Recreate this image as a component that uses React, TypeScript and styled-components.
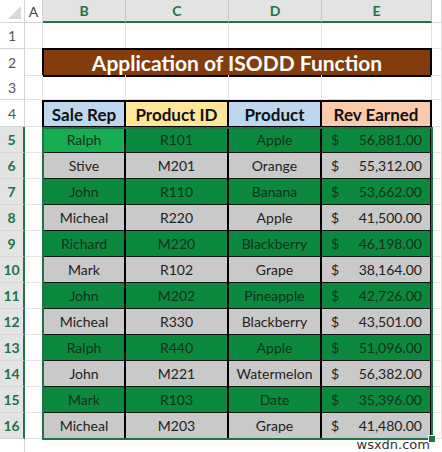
import React from "react";
import styled, { createGlobalStyle } from "styled-components";

const GlobalStyle = createGlobalStyle`
  html, body {
    margin: 0;
    padding: 0;
    background: #ffffff;
  }
  body {
    font-family: Lato, "Noto Sans", sans-serif;
    width: 442px;
    height: 452px;
    overflow: hidden;
  }
`;

const GREEN_UI = "#217346";

const Sheet = styled.div`
  display: flex;
  flex-direction: column;
  width: 442px;
  height: 452px;
`;

const SheetRow = styled.div<{ $h?: number }>`
  display: grid;
  grid-template-columns: 25px 18px 83px 103px 93px 110px 10px;
  height: ${(p) => p.$h ?? 26}px;
`;

const Corner = styled.div`
  background: #ffffff;
  border-right: 1px solid #d4d4d4;
  border-bottom: 1px solid #d4d4d4;
  box-sizing: border-box;
  position: relative;

  &::after {
    content: "";
    position: absolute;
    right: 3px;
    bottom: 3px;
    border-left: 13px solid transparent;
    border-bottom: 13px solid #dadada;
  }
`;

const ColHead = styled.div<{ $selected?: boolean }>`
  display: flex;
  align-items: center;
  justify-content: center;
  box-sizing: border-box;
  font-size: 14px;
  font-weight: ${(p) => (p.$selected ? 700 : 400)};
  color: ${(p) => (p.$selected ? GREEN_UI : "#444")};
  background: ${(p) => (p.$selected ? "#e3e3e3" : "#ffffff")};
  border-right: 1px solid ${(p) => (p.$selected ? "#c6c6c6" : "#d4d4d4")};
  border-bottom: ${(p) => (p.$selected ? `2px solid ${GREEN_UI}` : "1px solid #d4d4d4")};
`;

const RowHead = styled.div<{ $selected?: boolean }>`
  display: flex;
  align-items: center;
  justify-content: center;
  box-sizing: border-box;
  font-size: 14px;
  font-weight: ${(p) => (p.$selected ? 700 : 400)};
  color: ${(p) => (p.$selected ? GREEN_UI : "#555")};
  background: ${(p) => (p.$selected ? "#e3e3e3" : "#ffffff")};
  border-bottom: 1px solid #d4d4d4;
  border-right: ${(p) => (p.$selected ? `2px solid ${GREEN_UI}` : "1px solid #d4d4d4")};
`;

const Blank = styled.div`
  box-sizing: border-box;
  border-right: 1px solid #e2e2e2;
  border-bottom: 1px solid #e2e2e2;
`;

const Title = styled.div`
  grid-column: 3 / 7;
  display: flex;
  align-items: center;
  justify-content: center;
  background: #843c0c;
  color: #ffffff;
  font-size: 21px;
  font-weight: 700;
  border: 2px solid #000;
  margin: -1px 0 -1px -1px;
`;

const HeadCell = styled.div<{ $bg: string; $first?: boolean }>`
  display: flex;
  align-items: center;
  justify-content: center;
  box-sizing: border-box;
  background: ${(p) => p.$bg};
  font-size: 17px;
  font-weight: 700;
  color: #111;
  border-top: 2px solid #000;
  border-right: 2px solid #000;
  border-bottom: 1px solid #000;
  ${(p) => p.$first && "border-left: 2px solid #000; margin-left: -1px;"}
`;

const Cell = styled.div<{ $tone: "green" | "gray" | "active"; $first?: boolean }>`
  display: flex;
  align-items: center;
  justify-content: center;
  box-sizing: border-box;
  font-size: 14px;
  color: ${(p) => (p.$tone === "gray" ? "#222" : "#13301b")};
  background: ${(p) =>
    p.$tone === "active" ? "#17ad52" : p.$tone === "green" ? "#0a893f" : "#c9c9c9"};
  border-right: 2px solid #000;
  border-bottom: 1px solid #111;
  ${(p) => p.$first && "border-left: 2px solid #000; margin-left: -1px;"}
`;

const MoneyCell = styled(Cell)`
  justify-content: space-between;
  padding: 0 8px 0 9px;
`;

const DataSection = styled.div`
  display: flex;
  flex-direction: column;
  position: relative;
`;

const Selection = styled.div`
  position: absolute;
  left: 42px;
  top: 0;
  width: 391px;
  height: 313px;
  border: 2px solid ${GREEN_UI};
  box-sizing: border-box;
  pointer-events: none;

  &::after {
    content: "";
    position: absolute;
    right: -5px;
    bottom: -5px;
    width: 6px;
    height: 6px;
    background: ${GREEN_UI};
    border: 1px solid #fff;
  }
`;

const FooterRow = styled.div`
  flex: 1;
  display: grid;
  grid-template-columns: 25px 1fr;
`;

const FooterHead = styled.div`
  border-right: 1px solid #d4d4d4;
`;

const Watermark = styled.div`
  display: flex;
  justify-content: flex-end;
  align-items: flex-start;
  padding-right: 12px;
  font-family: "DejaVu Sans", sans-serif;
  font-size: 13px;
  color: #333;
  line-height: 12px;
`;

type Sale = { rep: string; id: string; product: string; rev: string };

const sales: Sale[] = [
  { rep: "Ralph", id: "R101", product: "Apple", rev: "56,881.00" },
  { rep: "Stive", id: "M201", product: "Orange", rev: "55,312.00" },
  { rep: "John", id: "R110", product: "Banana", rev: "53,662.00" },
  { rep: "Micheal", id: "R220", product: "Apple", rev: "41,500.00" },
  { rep: "Richard", id: "M220", product: "Blackberry", rev: "46,198.00" },
  { rep: "Mark", id: "R102", product: "Grape", rev: "38,164.00" },
  { rep: "John", id: "M202", product: "Pineapple", rev: "42,726.00" },
  { rep: "Micheal", id: "R330", product: "Blackberry", rev: "43,501.00" },
  { rep: "Ralph", id: "R440", product: "Apple", rev: "51,096.00" },
  { rep: "John", id: "M221", product: "Watermelon", rev: "56,382.00" },
  { rep: "Mark", id: "R103", product: "Date", rev: "35,396.00" },
  { rep: "Micheal", id: "M203", product: "Grape", rev: "41,480.00" },
];

const blanks = (n: number) => Array.from({ length: n }, (_, i) => <Blank key={i} />);

export default function App() {
  return (
    <>
      <GlobalStyle />
      <Sheet>
        <SheetRow $h={23}>
          <Corner />
          <ColHead>A</ColHead>
          <ColHead $selected>B</ColHead>
          <ColHead $selected>C</ColHead>
          <ColHead $selected>D</ColHead>
          <ColHead $selected>E</ColHead>
          <ColHead />
        </SheetRow>

        <SheetRow>
          <RowHead>1</RowHead>
          {blanks(6)}
        </SheetRow>

        <SheetRow>
          <RowHead>2</RowHead>
          <Blank />
          <Title>Application of ISODD Function</Title>
          <Blank />
        </SheetRow>

        <SheetRow $h={25}>
          <RowHead>3</RowHead>
          {blanks(6)}
        </SheetRow>

        <SheetRow $h={27}>
          <RowHead>4</RowHead>
          <Blank />
          <HeadCell $bg="#bdd7ee" $first>Sale Rep</HeadCell>
          <HeadCell $bg="#ffe699">Product ID</HeadCell>
          <HeadCell $bg="#bdd7ee">Product</HeadCell>
          <HeadCell $bg="#f8cbad">Rev Earned</HeadCell>
          <Blank />
        </SheetRow>

        <DataSection>
          {sales.map((s, i) => {
            const tone = i % 2 === 0 ? "green" : "gray";
            return (
              <SheetRow key={i}>
                <RowHead $selected>{i + 5}</RowHead>
                <Blank />
                <Cell $tone={i === 0 ? "active" : tone} $first>
                  {s.rep}
                </Cell>
                <Cell $tone={tone}>{s.id}</Cell>
                <Cell $tone={tone}>{s.product}</Cell>
                <MoneyCell $tone={tone}>
                  <span>$</span>
                  <span>{s.rev}</span>
                </MoneyCell>
                <Blank />
              </SheetRow>
            );
          })}
          <Selection />
        </DataSection>

        <FooterRow>
          <FooterHead />
          <Watermark>wsxdn.com</Watermark>
        </FooterRow>
      </Sheet>
    </>
  );
}
